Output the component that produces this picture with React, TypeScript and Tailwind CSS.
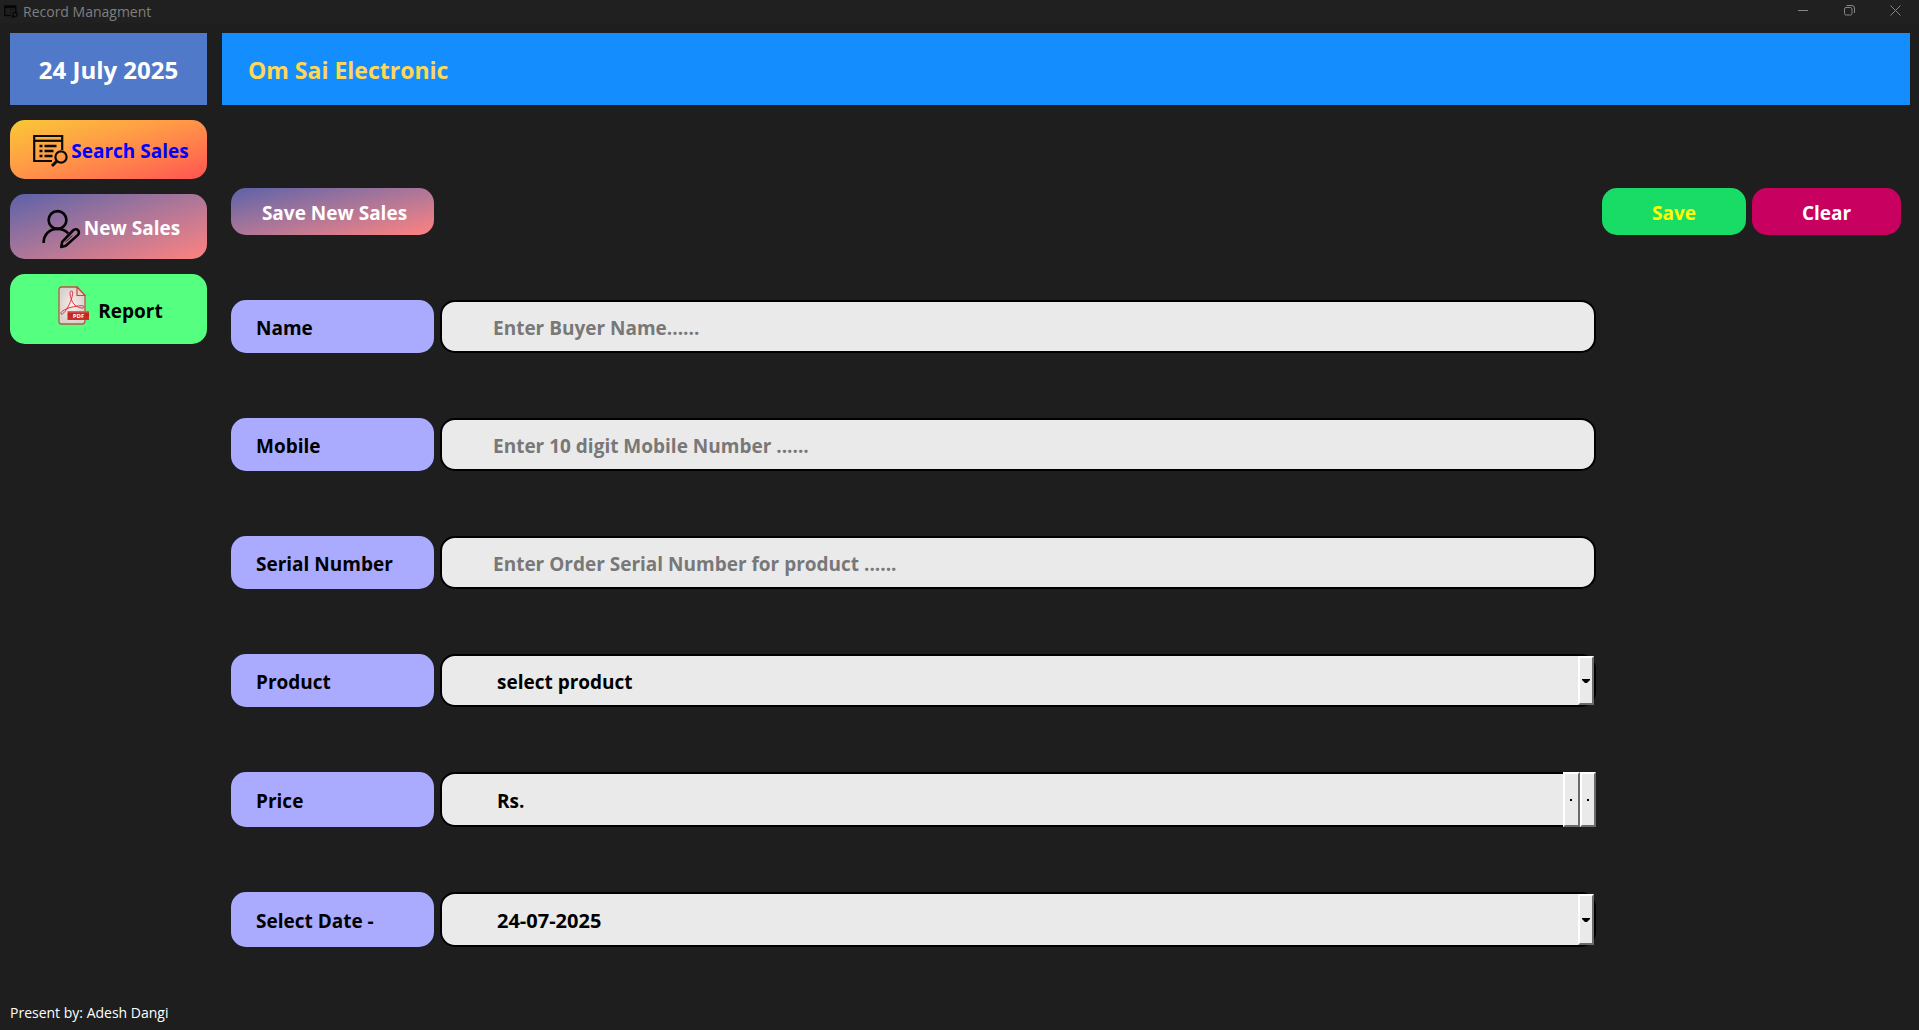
import React from "react";

const fieldClass =
  "h-full w-full appearance-none rounded-[15px] border-2 border-black bg-[#eaeaea] pt-[2px] font-bold text-black outline-none placeholder:text-[#787878] placeholder:opacity-100";

const bevel =
  "border-2 border-t-white border-l-white border-r-[#6b6b6b] border-b-[#6b6b6b] bg-[#eaeaea]";

function FieldLabel({ htmlFor, children }: { htmlFor: string; children: React.ReactNode }) {
  return (
    <label
      htmlFor={htmlFor}
      className="col-start-1 flex items-center rounded-[15px] bg-[#aaaaff] pt-[2px] pl-[25px] font-bold text-black"
    >
      {children}
    </label>
  );
}

function Arrow() {
  return (
    <svg width="8" height="4" viewBox="0 0 8 4" aria-hidden="true">
      <path d="M0 0h8v1L5 4H3L0 1z" fill="#000" />
    </svg>
  );
}

function SearchIcon() {
  return (
    <svg width="36" height="34" viewBox="0 0 36 34" fill="none" stroke="#0b0b0b" aria-hidden="true">
      <path d="M20 27H2.200V2h28v14" strokeWidth="2.2" />
      <path d="M2 6.8h28" strokeWidth="2.2" />
      <path d="M7.500 12h3M7.500 17h3M7.500 22h3" strokeWidth="2.4" />
      <path d="M12.500 12h12M12.500 17h9M12.500 22h8" strokeWidth="2.4" />
      <circle cx="29" cy="23" r="5.6" strokeWidth="2.2" />
      <path d="M25 27l-5 5" strokeWidth="3" />
    </svg>
  );
}

function UserEditIcon() {
  return (
    <svg width="40" height="41" viewBox="0 0 40 41" fill="none" stroke="#050505" strokeLinejoin="round" aria-hidden="true">
      <circle cx="16.5" cy="12" r="8.9" strokeWidth="2.6" />
      <path d="M2.6 35C2.600 26.500 8.500 20.900 16.500 20.900c4.300 0 8 1.600 10.700 4.400" strokeWidth="2.600" />
      <path d="M32 22.500c1.700-1.700 3.900-1.400 5-.3s1.400 3.200-.3 4.900L24.800 37.800l-4.600 1.200 1-5.200z" strokeWidth="2.600" />
      <path d="M31.500 27.500L24.500 34" strokeWidth="0.800" />
    </svg>
  );
}

function PdfIcon() {
  return (
    <svg width="31" height="39" viewBox="0 0 31 39" fill="none" aria-hidden="true">
      <defs>
        <linearGradient id="pdf-ribbon" x1="0" y1="0" x2="0" y2="1">
          <stop offset="0" stopColor="#d8756a" />
          <stop offset="0.3" stopColor="#c4211d" />
          <stop offset="1" stopColor="#cc3029" />
        </linearGradient>
        <radialGradient id="pdf-paper">
          <stop offset="0" stopColor="#f5efed" />
          <stop offset="1" stopColor="#dcd2cd" />
        </radialGradient>
      </defs>
      <path d="M3.500 1H19l8 8.500V35c0 2-1 3-3 3H3.500c-2 0-2.500-1-2.500-3V4c0-2 1-3 2.500-3z" fill="url(#pdf-paper)" stroke="#b8584a" strokeWidth="1.300" />
      <path d="M19 1v8.500h8z" fill="#f3cfca" stroke="#c24a40" strokeWidth="1.200" />
      <path d="M13.500 5c-2.500 0-1.500 5 .5 10 2 4.500 7 7.500 11 7 2-.5 1.500-2.500-2-2.300-6 .3-14 2.300-18 5-3 2-2.500 4.300-.5 3.200 3.500-2 8-11 9.500-17 .8-3 1.200-5.900-.5-5.900z" stroke="#e0323f" strokeWidth="1" />
      <path d="M9.500 25H31v9H9.500z" fill="url(#pdf-ribbon)" />
      <text x="20.500" y="32" textAnchor="middle" fontSize="6" fill="#fff" fontFamily="Open Sans, sans-serif">PDF</text>
    </svg>
  );
}

export default function App() {
  return (
    <div className="flex min-h-screen flex-col bg-[#1e1e1e] font-['Open_Sans',sans-serif] text-[19px] leading-[28px]">
      <header className="flex h-[23px] items-center bg-[#202020] pr-[18px] pl-1">
        <svg width="14" height="14" viewBox="0 0 14 14" fill="none" stroke="#060606" aria-hidden="true">
          <path d="M7 10.500H.8V1h11v6M.8 2.500h11" strokeWidth="1.400" />
          <path d="M2.500 5h1M2.500 7.500h1M5 5h5M5 7.500h3" stroke="#111" />
          <circle cx="11" cy="9.500" r="2.200" strokeWidth="1.200" />
          <path d="M9.500 11L8 13" strokeWidth="1.400" />
        </svg>
        <h1 className="ml-[5px] grow text-[14px] leading-[23px] text-[#7f7f7f]">Record Managment</h1>
        <div className="flex items-center gap-[35px] pb-[3px] text-[#858585]">
          <button type="button" aria-label="Minimize" className="flex">
            <svg width="11" height="11" viewBox="0 0 11 11" stroke="currentColor"><path d="M0 5.500h10" /></svg>
          </button>
          <button type="button" aria-label="Restore" className="flex">
            <svg width="11" height="11" viewBox="0 0 11 11" fill="none" stroke="currentColor">
              <rect x="0.500" y="2.500" width="7.500" height="7.500" rx="1.500" />
              <path d="M2.500.5h5.500q2.500 0 2.500 2.500v5" />
            </svg>
          </button>
          <button type="button" aria-label="Close" className="flex">
            <svg width="11" height="11" viewBox="0 0 11 11" stroke="currentColor"><path d="M.5.5l10 10M10.500.5l-10 10" /></svg>
          </button>
        </div>
      </header>

      <div className="flex grow gap-[15px] pt-[10px] pr-[9px] pl-[10px]">
        <aside className="flex w-[197px] shrink-0 flex-col gap-[15px]">
          <div className="flex h-[72px] items-center justify-center bg-[#5079c9] pt-[2px] text-[24px] font-bold text-white">24 July 2025</div>
          <button type="button" className="flex h-[59px] items-center justify-center gap-[3px] rounded-[15px] bg-linear-to-br from-[#f9c834] to-[#ff5151] pt-[3px] pl-[4px] font-bold text-[#0000ff]">
            <SearchIcon />
            Search Sales
          </button>
          <button type="button" className="flex h-[65px] items-center justify-center gap-[3px] rounded-[15px] bg-linear-to-br from-[#5b61a8] to-[#ff817e] pt-[3px] pl-[4px] font-bold text-white">
            <UserEditIcon />
            New Sales
          </button>
          <button type="button" className="flex h-[70px] items-center justify-center gap-[9px] rounded-[15px] bg-[#55ff7f] pl-[4px] font-bold text-black">
            <span className="pb-2"><PdfIcon /></span>
            <span className="pt-1">Report</span>
          </button>
        </aside>

        <main className="flex grow flex-col">
          <h2 className="flex h-[72px] items-center bg-[#148eff] pt-[2px] pl-[26px] text-[23px] font-bold text-[#ffd758]">Om Sai Electronic</h2>
          <form
            onSubmit={(e) => e.preventDefault()}
            className="mx-[9px] mt-[83px] grid grid-cols-[203px_minmax(0,1fr)_144px_149px] grid-rows-[47px_53px_53px_53px_53px_55px_55px] gap-x-[6px] gap-y-[65px]"
          >
            <h3 className="flex items-center justify-center rounded-[15px] bg-linear-to-br from-[#5b61a8] to-[#ff817e] pt-[3px] pl-[4px] font-bold text-white">Save New Sales</h3>
            <button type="submit" className="col-start-3 rounded-[15px] bg-[#18dc66] pt-[3px] font-bold text-[#ffff00]">Save</button>
            <button type="reset" className="col-start-4 rounded-[15px] bg-[#c80060] pt-[3px] font-bold text-white">Clear</button>

            <FieldLabel htmlFor="name">Name</FieldLabel>
            <input id="name" type="text" placeholder="Enter Buyer Name......" className={fieldClass + " pl-[51px]"} />

            <FieldLabel htmlFor="mobile">Mobile</FieldLabel>
            <input id="mobile" type="tel" placeholder="Enter 10 digit Mobile Number ......" className={fieldClass + " pl-[51px]"} />

            <FieldLabel htmlFor="serial">Serial Number</FieldLabel>
            <input id="serial" type="text" placeholder="Enter Order Serial Number for product ......" className={fieldClass + " pl-[51px]"} />

            <FieldLabel htmlFor="product">Product</FieldLabel>
            <div className="relative">
              <select id="product" className={fieldClass + " pl-[55px]"}>
                <option>select product</option>
              </select>
              <span className={bevel + " pointer-events-none absolute inset-y-[2px] right-[2px] flex w-[16px] items-center justify-center"}>
                <Arrow />
              </span>
            </div>

            <FieldLabel htmlFor="price">Price</FieldLabel>
            <div className="relative">
              <input id="price" type="text" defaultValue="Rs." className={fieldClass + " pl-[55px]"} />
              <div className="absolute inset-y-0 right-0 flex w-[33px] bg-[#6b6b6b]">
                <button type="button" aria-label="Increase price" className={bevel + " flex grow items-center justify-center"}>
                  <span className="h-[2px] w-[2px] bg-black" />
                </button>
                <button type="button" aria-label="Decrease price" className={bevel + " flex grow items-center justify-center"}>
                  <span className="h-[2px] w-[2px] bg-black" />
                </button>
              </div>
            </div>

            <FieldLabel htmlFor="date">Select Date -</FieldLabel>
            <div className="relative">
              <input id="date" type="text" defaultValue="24-07-2025" className={fieldClass + " pl-[55px] text-[20px]"} />
              <button type="button" aria-label="Open calendar" className={bevel + " absolute inset-y-[2px] right-[2px] flex w-[16px] items-center justify-center"}>
                <Arrow />
              </button>
            </div>
          </form>
        </main>
      </div>

      <footer className="px-[10px] pb-[7px] text-[14px] leading-[20px] text-white">Present by: Adesh Dangi</footer>
    </div>
  );
}
